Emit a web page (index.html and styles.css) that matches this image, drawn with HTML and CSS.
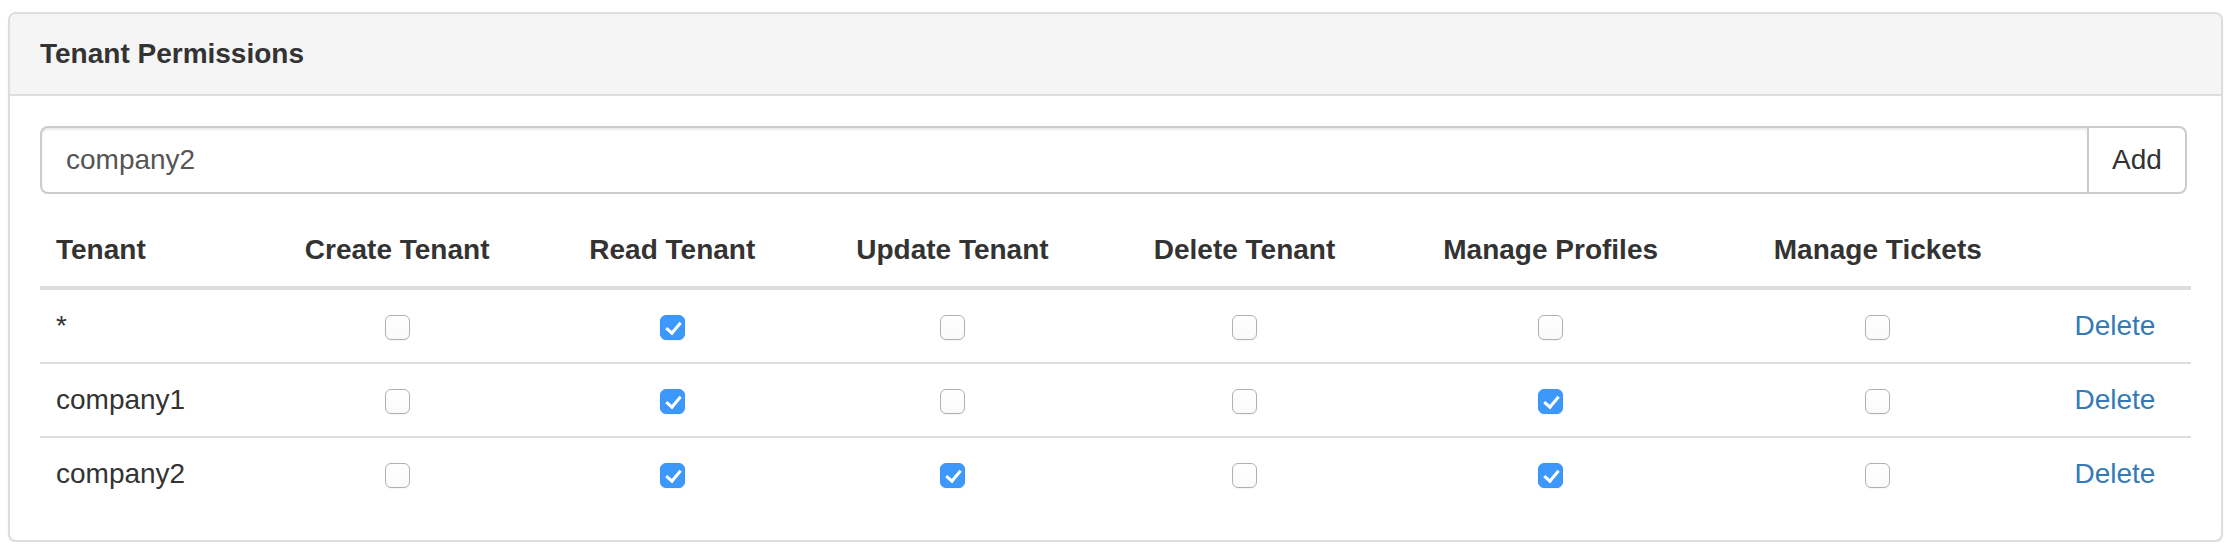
FILE: index.html
```html
<!DOCTYPE html>
<html lang="en">
<head>
<meta charset="utf-8">
<title>Tenant Permissions</title>
<link rel="stylesheet" href="styles.css">
</head>
<body>
<div class="panel">
  <div class="panel-heading">
    <h3 class="panel-title">Tenant Permissions</h3>
  </div>
  <div class="panel-body">
    <div class="input-group">
      <input class="form-control" type="text" value="company2">
      <button class="btn" type="button">Add</button>
    </div>
    <table class="table">
      <colgroup>
        <col class="c-tenant">
        <col class="c-create">
        <col class="c-read">
        <col class="c-update">
        <col class="c-delete">
        <col class="c-profiles">
        <col class="c-tickets">
        <col class="c-action">
      </colgroup>
      <thead>
        <tr>
          <th class="left">Tenant</th>
          <th>Create Tenant</th>
          <th>Read Tenant</th>
          <th>Update Tenant</th>
          <th>Delete Tenant</th>
          <th>Manage Profiles</th>
          <th>Manage Tickets</th>
          <th></th>
        </tr>
      </thead>
      <tbody>
        <tr>
          <td class="left">*</td>
          <td><input class="cb" type="checkbox"></td>
          <td><input class="cb" type="checkbox" checked></td>
          <td><input class="cb" type="checkbox"></td>
          <td><input class="cb" type="checkbox"></td>
          <td><input class="cb" type="checkbox"></td>
          <td><input class="cb" type="checkbox"></td>
          <td><a class="link" href="#">Delete</a></td>
        </tr>
        <tr>
          <td class="left">company1</td>
          <td><input class="cb" type="checkbox"></td>
          <td><input class="cb" type="checkbox" checked></td>
          <td><input class="cb" type="checkbox"></td>
          <td><input class="cb" type="checkbox"></td>
          <td><input class="cb" type="checkbox" checked></td>
          <td><input class="cb" type="checkbox"></td>
          <td><a class="link" href="#">Delete</a></td>
        </tr>
        <tr>
          <td class="left">company2</td>
          <td><input class="cb" type="checkbox"></td>
          <td><input class="cb" type="checkbox" checked></td>
          <td><input class="cb" type="checkbox" checked></td>
          <td><input class="cb" type="checkbox"></td>
          <td><input class="cb" type="checkbox" checked></td>
          <td><input class="cb" type="checkbox"></td>
          <td><a class="link" href="#">Delete</a></td>
        </tr>
      </tbody>
    </table>
  </div>
</div>
</body>
</html>
```

FILE: styles.css
```css
* { box-sizing: border-box; }

html, body {
  margin: 0;
  padding: 0;
  background: #fff;
}

body {
  font-family: "Liberation Sans", Arial, Helvetica, sans-serif;
  font-size: 28px;
  line-height: 40px;
  color: #333;
}

.panel {
  margin: 12px 9px 0 8px;
  border: 2px solid #ddd;
  border-radius: 8px;
  background: #fff;
  box-shadow: 0 2px 2px rgba(0, 0, 0, 0.05);
}

.panel-heading {
  padding: 20px 30px;
  background: #f5f5f5;
  border-bottom: 2px solid #ddd;
  border-radius: 6px 6px 0 0;
}

.panel-title {
  margin: 0;
  font-size: 28px;
  line-height: 40px;
  font-weight: bold;
  color: #333;
}

.panel-body {
  padding: 30px;
}

.input-group {
  display: flex;
  margin-right: 4px;
}

.form-control {
  flex: 1;
  height: 68px;
  margin: 0;
  padding: 12px 24px;
  font-family: inherit;
  font-size: 28px;
  line-height: 40px;
  color: #555;
  background: #fff;
  border: 2px solid #ccc;
  border-right: none;
  border-radius: 8px 0 0 8px;
  box-shadow: inset 0 2px 2px rgba(0, 0, 0, 0.075);
  outline: none;
}

.btn {
  width: 100px;
  height: 68px;
  margin: 0;
  padding: 12px 0;
  font-family: inherit;
  font-size: 28px;
  line-height: 40px;
  color: #333;
  background: #fff;
  border: 2px solid #ccc;
  border-radius: 0 8px 8px 0;
  text-align: center;
}

.table {
  width: 100%;
  margin-top: 20px;
  border-collapse: collapse;
  table-layout: fixed;
}

.c-tenant { width: 210px; }
.c-create { width: 294px; }
.c-read { width: 256px; }
.c-update { width: 304px; }
.c-delete { width: 280px; }
.c-profiles { width: 332px; }
.c-tickets { width: 322px; }
.c-action { width: 152px; }

.table th,
.table td {
  padding: 16px;
  line-height: 40px;
  text-align: center;
  vertical-align: middle;
  white-space: nowrap;
}

.table th {
  font-weight: bold;
  border-bottom: 4px solid #ddd;
}

.table tbody tr + tr td {
  border-top: 2px solid #ddd;
}

.table .left {
  text-align: left;
}

.link {
  color: #337ab7;
  text-decoration: none;
}

.cb {
  -webkit-appearance: none;
  appearance: none;
  position: relative;
  display: inline-block;
  width: 25px;
  height: 25px;
  margin: 0;
  vertical-align: middle;
  border: 1.5px solid #b0b0b0;
  border-radius: 6px;
  background: linear-gradient(#ffffff, #fafafa);
  box-shadow: 0 1px 1px rgba(0, 0, 0, 0.04);
}

.cb:checked {
  border-color: #3a93f6;
  background: #3c98fb;
}

.cb:checked::after {
  content: "";
  position: absolute;
  left: 8px;
  top: 3px;
  width: 6px;
  height: 12px;
  border-right: 3px solid #fff;
  border-bottom: 3px solid #fff;
  transform: rotate(40deg);
}
```
